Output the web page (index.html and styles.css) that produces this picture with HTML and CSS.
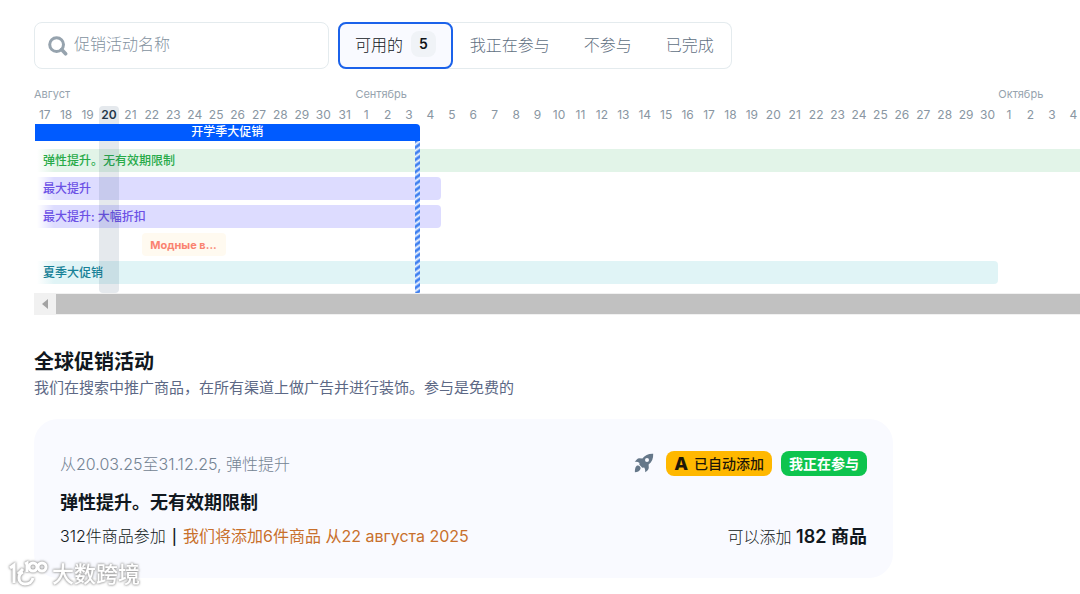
FILE: index.html
```html
<!DOCTYPE html>
<html lang="zh-CN">
<head>
<meta charset="utf-8">
<meta name="viewport" content="width=device-width, initial-scale=1">
<title>促销活动</title>
<link rel="stylesheet" href="styles.css">
</head>
<body>
<main class="page">
  <div class="toolbar">
    <label class="search">
      <svg class="search-icon" viewBox="0 0 20 20" aria-hidden="true"><circle cx="8.6" cy="8.6" r="6.9" fill="none" stroke="currentColor" stroke-width="3"/><path d="M13.6 13.6 17.6 17.8" fill="none" stroke="currentColor" stroke-width="3.6" stroke-linecap="round"/></svg>
      <input class="search-input" type="search" placeholder="促销活动名称" aria-label="促销活动名称">
    </label>
    <div class="tabs">
      <button class="tab tab-active" type="button">可用的 <span class="count">5</span></button>
      <button class="tab" type="button">我正在参与</button>
      <button class="tab" type="button">不参与</button>
      <button class="tab" type="button">已完成</button>
    </div>
  </div>

  <section class="timeline" aria-label="Календарь">
    <div class="calendar">
      <span class="month august">Август</span>
      <span class="month september">Сентябрь</span>
      <span class="month october">Октябрь</span>
      <div class="days">
        <span>17</span><span>18</span><span>19</span><span class="current">20</span><span>21</span><span>22</span><span>23</span><span>24</span><span>25</span><span>26</span><span>27</span><span>28</span><span>29</span><span>30</span><span>31</span>
        <span>1</span><span>2</span><span>3</span><span>4</span><span>5</span><span>6</span><span>7</span><span>8</span><span>9</span><span>10</span><span>11</span><span>12</span><span>13</span><span>14</span><span>15</span><span>16</span><span>17</span><span>18</span><span>19</span><span>20</span><span>21</span><span>22</span><span>23</span><span>24</span><span>25</span><span>26</span><span>27</span><span>28</span><span>29</span><span>30</span>
        <span>1</span><span>2</span><span>3</span><span>4</span>
      </div>
      <div class="bar school">开学季大促销</div>
      <div class="bar elastic fade">弹性提升。无有效期限制</div>
      <div class="bar boost fade">最大提升</div>
      <div class="bar boost-sale fade">最大提升: 大幅折扣</div>
      <div class="bar fashion">Модные в...</div>
      <div class="bar summer fade">夏季大促销</div>
      <div class="today"></div>
      <div class="deadline"></div>
    </div>
    <div class="scrollbar">
      <button class="scroll-left" type="button" aria-label="向左滚动"><svg viewBox="0 0 6 10" aria-hidden="true"><path d="M6 0v10L0 5z" fill="currentColor"/></svg></button>
      <div class="scroll-thumb"></div>
    </div>
  </section>

  <section class="global">
    <h2 class="title">全球促销活动</h2>
    <p class="subtitle">我们在搜索中推广商品，在所有渠道上做广告并进行装饰。参与是免费的</p>
    <article class="card">
      <div class="card-row card-top">
        <span class="period">从20.03.25至31.12.25, 弹性提升</span>
        <div class="badges">
          <svg class="rocket" viewBox="0 0 20 20" aria-hidden="true"><path fill="currentColor" fill-rule="evenodd" d="M19.2.7C14.4.5 11 2.1 8.4 5.4L5.2 5.2C3.6 5.3 1.9 7.1.7 8.9c2.1-.2 3.7.1 4.8 1-.2 1-.2 1.8.2 2.2l2.3 2.3c.5.4 1.3.4 2.2.2.8 1.2 1.1 2.8 1 4.7 2-1.2 3.5-2.9 3.6-4.5l-.2-3.2C18 9 19.4 5.5 19.2.7ZM13 4.9a2 2 0 1 1 0 4 2 2 0 0 1 0-4Z"/><path fill="currentColor" d="M3.4 12.500c1.600-.5 3.500 1.300 3.200 3-.4 2.400-2.800 3.700-5.700 3.700 0-2.900.4-6.100 2.500-6.700Z"/></svg>
          <span class="badge badge-auto"><b class="badge-letter">A</b>已自动添加</span>
          <span class="badge badge-joined">我正在参与</span>
        </div>
      </div>
      <h3 class="card-title">弹性提升。无有效期限制</h3>
      <div class="card-row">
        <p class="summary">312件商品参加<span class="divider">|</span><span class="warning">我们将添加6件商品 从22 августа 2025</span></p>
        <p class="available">可以添加 <strong>182 商品</strong></p>
      </div>
    </article>
  </section>
</main>
<div class="watermark">
  <svg class="watermark-logo" viewBox="0 0 40 30" aria-hidden="true"><path d="M2 9l4-3v18M15 10l-5 5M15 13c-3 1-4 3-4 6 0 4 3 6 6 6 4 0 7-2 8-6M17 5l2-1v9"/><circle cx="25" cy="8" r="4"/><circle cx="34" cy="8" r="4"/></svg>
  <span>大数跨境</span>
</div>
</body>
</html>
```
FILE: styles.css
```css
* { box-sizing: border-box; }

body {
  margin: 0;
  background: #fff;
  color: #111820;
  font-family: Inter, "Noto Sans CJK SC", sans-serif;
  font-size: 16px;
  overflow-x: hidden;
}

button, input { font: inherit; }
h2, h3, p { margin: 0; }

.page { padding: 22px 0 16px 34px; }

.toolbar { display: flex; gap: 9px; }

.search {
  display: flex;
  align-items: center;
  gap: 6px;
  width: 295px;
  height: 47px;
  padding: 0 13px;
  border: 1px solid #e4ebee;
  border-radius: 8px;
}
.search-icon { width: 20px; height: 20px; flex: none; color: #96a3ae; }
.search-input {
  flex: 1;
  min-width: 0;
  padding: 0 0 3px;
  border: 0;
  outline: 0;
  background: none;
  font-weight: 300;
}
.search-input::placeholder { color: #84929f; opacity: 1; }

.tabs {
  display: flex;
  height: 47px;
  padding-right: 1px;
  border-radius: 8px;
  box-shadow: inset 0 0 0 1px #e4ebee;
}
.tab {
  padding: 0 17px 4px;
  border: 0;
  background: none;
  color: #5f6f7f;
  font-weight: 300;
  white-space: nowrap;
}
.tab-active {
  display: flex;
  align-items: center;
  gap: 8px;
  padding: 0 15px 3px;
  border: 2px solid #1b62ea;
  border-radius: 8px;
  background: #f9faff;
  color: #101419;
}
.count {
  padding: 0 8px;
  border-radius: 8px;
  background: #f0f3f7;
  font-size: 14px;
  font-weight: 600;
  line-height: 26px;
}

.timeline { margin-top: 17px; overflow: hidden; }

/* 49 day columns; the last one runs slightly past the visible edge. */
.calendar {
  display: grid;
  grid-template-columns: repeat(49, minmax(0, 1fr));
  grid-template-rows: 20px 18px 25px repeat(4, 28px) 32px;
  align-items: start;
  margin-right: -4px;
  font-size: 12px;
}
.month { grid-row: 1; color: #96a3ae; font-size: 11px; line-height: 17px; }
.august { grid-column: 1 / span 5; }
.september { grid-column: 16 / span 5; }
.october { grid-column: 46 / span 4; }

.days {
  display: grid;
  grid-row: 2;
  grid-column: 1 / -1;
  grid-template-columns: subgrid;
  color: #8996a2;
  line-height: 18px;
  text-align: center;
}
.current { color: #253544; font-weight: 600; }

.bar {
  height: 23px;
  padding-left: 9px;
  border-radius: 0 4px 4px 0;
  font-weight: 500;
  line-height: 24px;
  white-space: nowrap;
}
.fade { background: linear-gradient(to right, transparent 3px, var(--fill) 20px); }
.school {
  z-index: 1;
  grid-row: 3;
  grid-column: 1 / span 18;
  height: 17px;
  margin-left: 1px;
  padding: 0;
  border-radius: 0 4px 0 0;
  background: #005bff;
  color: #fff;
  line-height: 16px;
  text-align: center;
}
.elastic { grid-row: 4; grid-column: 1 / -1; --fill: #e2f4e8; color: #27aa48; }
.boost { grid-row: 5; grid-column: 1 / span 19; --fill: #dddcff; color: #6b50e5; }
.boost-sale { grid-row: 6; grid-column: 1 / span 19; --fill: #dddcff; color: #6b50e5; }
.fashion {
  grid-row: 7;
  grid-column: 6 / span 4;
  margin: 0 1px;
  padding-left: 8px;
  border-radius: 4px;
  background: #fffaf0;
  color: #fa8370;
  font-size: 11px;
  font-weight: 700;
}
.summer { grid-row: 8; grid-column: 1 / span 45; --fill: #e0f4f6; color: #168197; }

.today {
  grid-row: 2 / -1;
  grid-column: 4;
  align-self: stretch;
  margin: 0 1px;
  border-radius: 4px;
  background: rgba(40, 75, 110, 0.12);
}
.deadline {
  grid-row: 3 / -1;
  grid-column: 18;
  align-self: stretch;
  justify-self: end;
  width: 5px;
  margin-top: 17px;
  background: repeating-linear-gradient(145deg, #3f80f0 0 1px, #f4f8ff 3px, #3f80f0 5px);
}

.scrollbar { display: flex; height: 22px; padding: 1px 0; background: #f1f1f1; }
.scroll-left {
  display: grid;
  place-items: center;
  width: 22px;
  padding: 0;
  border: 0;
  background: none;
  color: #a3a3a3;
}
.scroll-left svg { width: 6px; height: 10px; }
.scroll-thumb { flex: 1; background: #c1c1c1; }

.global { max-width: 859px; margin-top: 33px; }
.title { font-size: 20px; font-weight: 700; line-height: 28px; }
.subtitle { color: #5c6885; font-size: 15px; font-weight: 400; line-height: 24px; }

.card {
  margin-top: 19px;
  padding: 29px 26px 28px;
  border-radius: 24px;
  background: #f9faff;
}
.card-row { display: flex; align-items: center; justify-content: space-between; }
.card-top { min-height: 30px; }
.period { color: #748393; font-weight: 300; }
.badges { display: flex; align-items: center; gap: 9px; }
.rocket { width: 20px; height: 20px; margin-right: 3px; color: #657789; }
.badge {
  display: flex;
  align-items: center;
  padding: 0 8px;
  border-radius: 8px;
  font-size: 14px;
  font-weight: 500;
  line-height: 25px;
}
.badge-auto { background: #ffb800; color: #1d1708; }
.badge-letter { margin-right: 6px; font-size: 18px; font-weight: 800; }
.badge-joined { background: #0dc44e; color: #fff; font-weight: 700; }
.card-title { margin: 12px 0 7px; font-size: 18px; font-weight: 700; line-height: 26px; }
.summary, .available { line-height: 26px; font-weight: 300; }
.divider { margin: 0 6px; font-weight: 500; font-size: 15px; }
.warning { color: #c8702c; font-weight: 400; }
.available strong { font-size: 18px; font-weight: 600; }

/* Stamp laid over the page corner. */
.watermark {
  position: absolute;
  bottom: 4px;
  left: 8px;
  display: flex;
  align-items: center;
  gap: 4px;
  color: #fff;
  font-size: 22px;
  font-weight: 500;
  line-height: 32px;
  filter: drop-shadow(0 0 1px #999) drop-shadow(0 0 1px #bbb);
}
.watermark-logo { width: 40px; height: 30px; fill: none; stroke: currentColor; stroke-width: 3; }
```
